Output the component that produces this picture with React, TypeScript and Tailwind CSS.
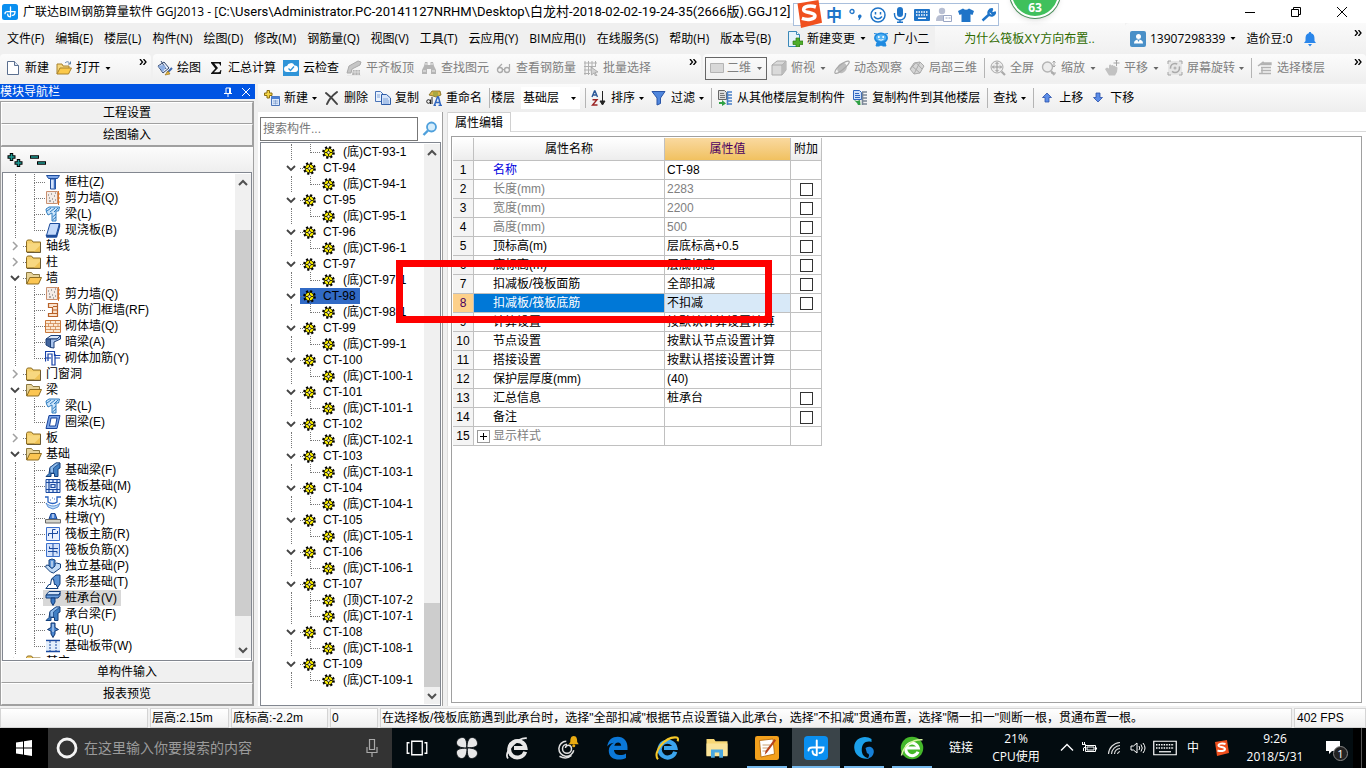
import type { ReactNode } from 'react'

const SONG = "font-['Liberation_Sans','Noto_Sans_CJK_SC',sans-serif]"
const YAHEI = "font-['Open_Sans','Noto_Sans_CJK_SC',sans-serif]"

const icons: Record<string, ReactNode> = {
    newFile: <><path d="M2.500 1.500h7l4 4v9h-11z" fill="#fff" stroke="#5b6f8f" /><path d="M9.500 1.500v4h4" fill="#dce6f4" stroke="#5b6f8f" /></>,
    open: <><path d="M1 14V4h5l1 2h6v3" fill="#f6d77c" stroke="#a8822c" /><path d="M1 14l3-6h11.500l-3 6z" fill="#fbc94a" stroke="#a8822c" /><path d="M9 3c2-2 4-1.500 5 1M14.500 1.500V4H12" fill="none" stroke="#5b7fa8" /></>,
    draw: <><path d="M1 6l6-4 5 6-6 5z" fill="#e6eefb" stroke="#31456b" /><path d="M4 1l5 8" stroke="#31456b" /><path d="M1 6l5-1 3 2-3 5z" fill="#8fb0e4" /><path d="M15 8l-5 5" stroke="#3c68b0" strokeWidth="2" /><path d="M11 11l-3 4 5-1z" fill="#e8b53a" stroke="#8c6a18" strokeWidth=".6" /></>,
    sigma: <path d="M3 2h10v3.500h-1c0-1.500-.7-2-2-2H6.300L10 8l-4 4.300h4.200c1.300 0 2-.8 2.200-2.200h1L12.800 14H3v-.8L7.300 8.500 3 3z" fill="#111" />,
    cloud: <><rect width="16" height="16" fill="#2f94d8" /><path d="M4 12a3 3 0 0 1 0-6 4 4 0 0 1 7.500-.5A3.200 3.200 0 0 1 12 12z" fill="#fff" /><path d="M5.500 8.500l2 2 3.500-4" fill="none" stroke="#2f94d8" strokeWidth="1.300" /></>,
    align: <><path d="M1 13l2-7 9-5 3 1-1 3-8 4-1 4z" fill="#c6c6c6" stroke="#aaa" /><path d="M7 10h7v5H6z" fill="#b4b4b4" /><path d="M1 15.500h14M7 12h7M9 10v5M12 10v5" stroke="#e6e6e6" strokeWidth=".8" /></>,
    binoc: <><path d="M4 2h2.500v3h3V2H12l1 4 2 4v4h-5V9H6v5H1v-4l2-4z" fill="#b5b5b5" /><path d="M2 11h3M11 11h3M4 4h2M10 4h2" stroke="#eee" /></>,
    glasses: <><circle cx="4" cy="10" r="2.500" fill="none" stroke="#aaa" strokeWidth="1.400" /><circle cx="11" cy="10" r="2.500" fill="none" stroke="#aaa" strokeWidth="1.400" /><path d="M6.500 9.500h2M2 8l4-4M13.500 9.500V4" stroke="#aaa" fill="none" strokeWidth="1.200" /></>,
    batch: <><path d="M2 1v14M5.500 1v14M9 1v8M12.500 1v6M1 3h13M1 6.500h12M1 10h7M1 13.500h6" stroke="#b0b0b0" /><path d="M8 7l7 5-3 .5 2 3-1.500.5-1.500-3-2.500 2z" fill="#d2d2d2" stroke="#999" strokeWidth=".7" /></>,
    flat: <path d="M1.500 3.500h13v9h-13z" fill="#d8d8d8" stroke="#b4b4b4" />,
    cube: <><path d="M1 5l5-4h9v9l-4 5H1z" fill="#dadada" stroke="#aaa" /><path d="M1 5h10v10M11 5l4-4" fill="none" stroke="#aaa" /><path d="M11 5l4-4v9l-4 5z" fill="#bcbcbc" /></>,
    orbit: <><ellipse cx="8" cy="8" rx="4.500" ry="5.500" transform="rotate(35 8 8)" fill="#bdbdbd" /><path d="M1 13c-1-2 3-7 8-10s7-2 6 0-4 5-8 8-5 3-6 2z" fill="none" stroke="#a8a8a8" strokeWidth="1.200" /></>,
    local3d: <><path d="M1 9l4-6 6-1 4 4-4 7-6 1z" fill="#d6d6d6" stroke="#aaa" /><path d="M3 6l8 7M7 2.500L13 9M11 2L5 14M7 2.500L1.500 9" stroke="#aaa" fill="none" /></>,
    full: <><circle cx="7" cy="7" r="6" fill="#ededed" stroke="#aaa" /><path d="M7 2.500v9M2.500 7h9M5.500 4L7 2.500 8.500 4M5.500 10L7 11.500 8.500 10M4 5.500L2.500 7 4 8.500M10 5.500L11.500 7 10 8.500" stroke="#999" fill="none" /><path d="M11.500 11.500l3.500 3.500" stroke="#aaa" strokeWidth="2.200" /></>,
    zoom: <><circle cx="6.500" cy="7" r="5" fill="#ededed" stroke="#b4b4b4" strokeWidth="1.400" /><path d="M10 11l3.500 4" stroke="#b4b4b4" strokeWidth="2.200" /><path d="M13 1v6M11.500 2.500L13 1l1.500 1.500M11.500 5.500L13 7l1.500-1.500M10 13h5" stroke="#a4a4a4" fill="none" /></>,
    pan: <><path d="M1 9l2-1.500 2 1V5.500c.5-1.500 2-1.500 2.300 0 .7-1 2-.6 2.200.5 1-.6 2 0 2 1 1-.4 2 .2 2 1.200L13 12l-2 3.500H5z" fill="#c2c2c2" /><path d="M12.500 0v6M9.500 3h6M11.500 1l1-1 1 1" stroke="#a4a4a4" fill="none" /></>,
    rotate: <><path d="M1 1h14v14H1z" fill="#e6e6e6" /><circle cx="8" cy="8" r="4.500" fill="none" stroke="#aaa" strokeWidth="1.600" strokeDasharray="10 3" /><path d="M1 4V1h3M12 1h3v3M15 12v3h-3M4 15H1v-3" fill="none" stroke="#a4a4a4" /><circle cx="8" cy="8" r="1.500" fill="#b4b4b4" /></>,
    floors: <path d="M1 6l5-4 1 1h7v1.500H3.500zM4 7.500h10M4 10.500h10M2 13.500h12M5 7v7" fill="#bbb" stroke="#b2b2b2" strokeWidth="1.300" />,
    addItem: <><path d="M7.500 6.500h8v9h-8z" fill="#dbe8fb" stroke="#4a74b8" /><path d="M7.500 6.500h8V9h-8z" fill="#4a7fd4" /><path d="M9 11h5M9 13.200h5M11.500 10v4.500" stroke="#7fa0d0" strokeWidth=".8" /><path d="M3 .5h2.500v2.500H8v2.500H5.500V8H3V5.500H.5V3H3z" fill="#f5d545" stroke="#8a6d10" /></>,
    del: <path d="M2 3c4 3 7 6 11 11M13 2C9 5 5 9 3 14" fill="none" stroke="#444" strokeWidth="2" strokeLinecap="round" />,
    copy: <><path d="M.5 1.500h5l3 3v7h-8z" fill="#eaf2fd" stroke="#4a74b8" /><path d="M6.500 4.500h5l4 3.500v6.500h-9z" fill="#d5e4fa" stroke="#2f5da8" /><path d="M8 9h5M8 11h6M8 13h6M2 5h3M2 7h3" stroke="#6b93cf" strokeWidth=".8" /></>,
    rename: <><path d="M3 5l3-4h8l1 4-5 2-3-1z" fill="#d9b648" stroke="#7d671c" strokeWidth=".8" /><path d="M7 3h5M7 5h5" stroke="#7a9a3c" /><circle cx="2.500" cy="11.500" r="1.800" stroke="#222" /><path d="M4.500 9.500v4.500M6 7v7" stroke="#222" /><path d="M7.500 15.500h2.500M12.500 15.500H16M8.500 15l3-8h1l2 8M10 12.500h4" stroke="#2f66c0" strokeWidth="1.500" /></>,
    sort: <><path d="M1 7l2.500-6h.5L6.500 7M2 5h3.500" stroke="#2b5797" strokeWidth="1.400" /><path d="M1.500 9.700h4.500L1.500 15h5" stroke="#9b2323" strokeWidth="1.400" /><path d="M11.500 1v12M9 11l2.500 4 2.500-4z" stroke="#222" fill="#222" /></>,
    filter: <path d="M1 1.500h13L9.500 8v5.500L6 15V8z" fill="#4f86dd" stroke="#2a55a6" />,
    copyFrom: <><path d="M1.500.5h6l2 2v7h-8z" fill="#dcdcdc" stroke="#666" /><path d="M3 3.500h4M3 5.500h5M3 7.500h5" stroke="#777" /><path d="M10 2h5M10 5h5M10 8h5M10 11h5M10 14h5M10.500 2v13" stroke="#4a80c8" strokeWidth="1.600" /><path d="M2 12h3v-2l4 3.500L5 16v-2H2z" fill="#2fa044" /></>,
    copyTo: <><path d="M1.500.5h6l2 2v7h-8z" fill="#cfe1fb" stroke="#2f66c0" /><path d="M3 3.500h4M3 5.500h5M3 7.500h5" stroke="#2f66c0" /><path d="M10 2h5M10 5h5M10 8h5M10 11h5M10 14h5M10.500 2v13" stroke="#7a8796" strokeWidth="1.600" /><path d="M2 10l3 1 3-1 .5 5H6l-1-2z" fill="#2fa044" /></>,
    up: <path d="M8 3l4.500 4.500H10V12H6V7.500H3.500z" fill="#5b8de8" stroke="#2c52a8" strokeWidth=".8" />,
    down: <path d="M8 12l4.500-4.500H10V3H6v4.500H3.500z" fill="#5b8de8" stroke="#2c52a8" strokeWidth=".8" />,
    change: <><path d="M1.500.5h8l3 3v12h-11z" fill="#e6f3fb" stroke="#3a88b8" /><path d="M9.500.5v3h3" fill="#fff" stroke="#3a88b8" /><path d="M9 7h3.500v3H16v3.500h-3.500V16H9v-2.500H6V10h3z" fill="#4fae2a" stroke="#2c7a12" strokeWidth=".7" /></>,
    robot: <><ellipse cx="8" cy="7" rx="7" ry="5.500" fill="#1f8ae0" /><ellipse cx="8" cy="6.800" rx="5.200" ry="3.600" fill="#55b4f4" /><path d="M4 11.500h8l1 3.500h-3l-2-1-2 1H3zM1 2.500l3 .5M15 2.500l-3 .5" fill="#1f8ae0" stroke="#1f8ae0" /><circle cx="5.800" cy="6" r="1" fill="#fff" /><circle cx="10.200" cy="6" r="1" fill="#fff" /><path d="M5.500 8.300q2.500 1.800 5 0" stroke="#fff" fill="none" strokeWidth=".9" /></>,
    user: <><rect width="16" height="16" rx="2" fill="#4a90c8" /><circle cx="8.500" cy="5.500" r="2.500" fill="#fff" /><path d="M4 12.500c0-3 2-4 4.500-4s4.500 1 4.500 4z" fill="#fff" /><path d="M7.500 9l1 2 1-2" fill="#4a90c8" /></>,
    bell: <path d="M8 1c.8 0 1.200.5 1.200 1.200C12 3 12.500 5 12.500 8v2l1.500 2H2l1.500-2V8c0-3 .5-5 3.300-5.800C6.800 1.500 7.200 1 8 1zM6 13h4l-2 2.500z" fill="#2a86ea" />,
    folder: <><path d="M.5 3.500l1-1.500h4l1.500 2h7.500v10H.5z" fill="#f5cf6b" stroke="#8d6d22" /><path d="M1.500 5.500H14V13H1.500z" fill="#f8d880" /><path d="M8 13.500l6-6v6z" fill="#f0c356" /><path d="M14.500 5v9.500H1" fill="none" stroke="#6b5a35" /></>,
    folderOpen: <><path d="M.5 14V2.500h5L7 4.500h6.500V8" fill="#e8d49a" stroke="#8d7a42" /><path d="M.8 14l3-6.500h11.700L12.500 14z" fill="#fbc552" stroke="#8d6d22" /></>,
    column: <><path d="M1.500 1.500h13l-2 3h-9z" fill="#7ba5e8" stroke="#1e4d9c" /><path d="M5.500 5h5v10h-5z" fill="#d5e4fc" stroke="#1e4d9c" /><path d="M9.500 5v10" stroke="#3b6cc0" strokeWidth="1.500" /></>,
    wall: <><path d="M1.500 1.500h11v12h-11z" fill="#f4ebe6" stroke="#c99070" /><path d="M3 5h1M6 4h1M9 6h1M4 8h1M7 9h1M10 10h1M4 11h2M8 12h1M10 3h1" stroke="#666" /><path d="M13.500 1v14M12.500 4H15M12.500 8H15M12.500 12H15" stroke="#d9772c" /></>,
    beam: <><path d="M1 3l3-2h10.500l-1 4H11v10H7V7L3 9 1.500 6z" fill="#cbe4fa" stroke="#2e7cc0" /><path d="M2 5l4-3M5 6l5-4M9 6l4-4M7.500 11L11 8M7.500 14l3.500-3" stroke="#2e7cc0" /></>,
    slab: <><path d="M5 1.500h9.500L11 13.500H1.500z" fill="#c4dafb" stroke="#1e4d9c" /><path d="M1.500 13.500h9.500v1.500H2zM14.500 1.500v3L11.500 15" fill="none" stroke="#1e4d9c" strokeWidth="1.400" /></>,
    doorWall: <path d="M3.500 1.500h9v13h-9v-3h4v-6h-4zM8 4.500h4M8 8h4M8 11.500h4" fill="#fbe3cc" stroke="#b8622a" strokeWidth="1.200" />,
    brick: <><path d="M.5 2.500h15v12H.5z" fill="#fce8d2" stroke="#c8783c" /><path d="M1 5.500h14M1 8.500h14M1 11.500h14M5.500 3v3M10.500 3v3M3.500 6v3M8.500 6v3M13 6v3M5.500 9v3M10.500 9v3M8.500 12v3" stroke="#d08850" strokeWidth=".8" /></>,
    hidden: <><path d="M1 5l5-3.500h9.500L12 5z" fill="#dce8fa" stroke="#1d3f78" /><path d="M1 5h4.500v8.500L1 11z" fill="#43659c" stroke="#1d3f78" /><path d="M5.500 5H12l3.500-3.500V5L9 8v6l-3.500-.5z" fill="#a9c4ec" stroke="#1d3f78" /></>,
    rebar: <path d="M.5 11.500V1.500h9v4h6M3 11V4h4v11h3V8h5M0 8h6M10 4v4" fill="none" stroke="#1540a8" strokeWidth="1.200" />,
    ring: <><path d="M4 1.500h11L12 14.500H1z" fill="#7ba5e8" stroke="#17429a" /><path d="M6 4h6l-1.500 8H4.500z" fill="#fff" stroke="#17429a" /></>,
    footBeam: <><path d="M1 14.500l3-3 1-6 6-4.500h4v5l-2 1v7.500H9.500v-3H6v3z" fill="#3f7fc4" stroke="#123e7a" /><path d="M5 5.500L11 1h4L8.500 6v5H5z" fill="#8fbcec" stroke="#123e7a" strokeWidth=".7" /></>,
    raft: <><path d="M1 1.500h14v13H1z" fill="#dbe9fd" stroke="#1a4aa0" /><path d="M4 1v14M12 1v14M1 4.500h14M1 11.500h14M6 6.500h4v3H6zM8 1v3M8 12v3" fill="none" stroke="#1a4aa0" strokeWidth="1.200" /></>,
    pit: <><path d="M0 3h3v5q5 3 9 0V3h4" fill="none" stroke="#2a63c0" strokeWidth="1.300" /><path d="M1 9c4 4 10 4 14 0l-2 4-5 2-5-2z" fill="#c4e0fa" stroke="#3c78cc" strokeWidth=".8" /><path d="M5 6h1M9 5h1M7 4h1" stroke="#3c78cc" /></>,
    pier: <><path d="M6 3.500h4l2 5.500H4z" fill="#4a83d8" stroke="#16408a" /><path d="M8 4v4" stroke="#fff" /><path d="M.5 9.500h15v3.500H.5z" fill="#d4d4cc" stroke="#666" /></>,
    raftMain: <><path d="M1.500 1.500h13v13h-13z" fill="#e8f0fe" stroke="#3c70cc" /><path d="M7.500 12.500v-9h3M3.500 10V7.500h9V5" stroke="#1a4aa0" /></>,
    raftNeg: <><path d="M1.500 1.500h13v13h-13z" fill="#d3e2fb" stroke="#3c70cc" /><path d="M8 2v12M4 6.500h9M3 9.500h9M4.500 4.500v2M12 9.500v2" stroke="#1a4aa0" /></>,
    isolated: <><path d="M.5 9l5 5 3 1 7-5V6l-4-1-4 3-6-1z" fill="#c2dbf6" stroke="#123e7a" /><path d="M4 2l3-1 3 1v6l-3 2.500L4 8z" fill="#5a92d4" stroke="#123e7a" /><path d="M7 3v6" stroke="#fff" /></>,
    strip: <><path d="M1 14.500l3-4h2l1-6 4-3.500h4v9l-3 4.500z" fill="#5a92d4" stroke="#123e7a" /><path d="M1 14.500l3-4h1.500L6.500 5h2l1 5.500H11l2 4z" fill="#fff" stroke="#123e7a" /></>,
    cap: <><path d="M1 5l3-3.500h11.500L14 5z" fill="#cfe3fa" stroke="#123e7a" /><path d="M1 5h13l1-2v2.500L13 8H1z" fill="#6aa0e0" stroke="#123e7a" /><path d="M6 8h4v4l-2 3.500L6 12z" fill="#3b78c4" stroke="#123e7a" /></>,
    pile: <><path d="M6 1h4v4.500l3.500 2L10 9v3l-2 3.500L6 12V9L2.500 7.500l3.500-2z" fill="#4a86d0" stroke="#0f3570" /><path d="M8 2v8" stroke="#dcebfc" /></>,
    band: <><path d="M1 4h14v9H1z" fill="#e2eefc" /><path d="M1 2.500h14M1 13.500h14" stroke="#1a4aa0" strokeWidth="1.400" /><path d="M5 3v10M11 3v10" stroke="#1a4aa0" strokeDasharray="2 1" /></>,
    gear: <><circle cx="8" cy="8" r="6.300" stroke="#000" strokeWidth="3" strokeDasharray="2.500 2.450" /><circle cx="8" cy="8" r="5.300" fill="#fff200" stroke="#000" strokeWidth="1" /><path d="M8 3.500v9M3.500 8h9" stroke="#000" strokeWidth="1" /><circle cx="8" cy="8" r="1.900" fill="#fffbd0" stroke="#000" strokeWidth=".9" /></>,
    smile: <><circle cx="8" cy="8" r="7" fill="none" stroke="#1f74c8" strokeWidth="1.500" /><path d="M5.500 5v2.500M10.500 5v2.500M4 9.500q4 4.500 8 0" fill="none" stroke="#1f74c8" strokeWidth="1.500" /></>,
    punct: <><circle cx="4" cy="4.500" r="2" fill="none" stroke="#1f74c8" strokeWidth="1.300" /><path d="M10 9.500a1.800 1.800 0 1 1 2.500 1.500c-.5 1.500-1 2-2.500 2.500 1-1 1-2 .8-2.500-.5-.3-.8-.8-.8-1.500z" fill="#1f74c8" /></>,
    mic: <><rect x="5" y="0" width="6" height="10" rx="3" fill="#1f74c8" /><path d="M2.500 6v1.500a5.500 5.500 0 0 0 11 0V6M8 13v3M5 15.300h6" fill="none" stroke="#1f74c8" strokeWidth="1.400" /></>,
    kbd: <><rect x="0" y="2" width="16" height="12" rx="1" fill="#1f74c8" /><path d="M2 5h12M2 8h12" stroke="#fff" strokeWidth="1.500" strokeDasharray="1.500 1" /><path d="M4 11.300h8" stroke="#fff" strokeWidth="1.400" /></>,
    person: <><circle cx="6" cy="4" r="3.200" fill="#b8bfd2" /><path d="M0 14c0-5 2-6 6-6h3v6z" fill="#b8bfd2" /><path d="M7.500 8.500h8v6h-8zM9.500 11h2M12.500 11h2" fill="#fff" stroke="#9aa6c4" /></>,
    shirt: <path d="M5 1.500q3 2.500 6 0l5 2.500-1.500 4-2-.7V15h-9V7.300l-2 .7L0 4z" fill="#1f74c8" />,
    wrench: <path d="M2.500 13.500L9 7.500M9 7.500a3.500 3.500 0 0 1 3-5.300L11 5l1.500 1.500 2.500-1a3.500 3.500 0 0 1-6 2" fill="none" stroke="#1f74c8" strokeWidth="2.400" strokeLinejoin="round" />,
    search: <><circle cx="9.500" cy="6" r="4.500" fill="#d6edfb" stroke="#4fa0dc" strokeWidth="1.800" /><path d="M6 9.500L1.500 14" stroke="#4fa0dc" strokeWidth="2.400" /></>,
    plusPlus: <><path d="M4.500 1v8M.5 5h8M11.500 7v8M7.500 11h8" stroke="#000" strokeWidth="3.400" /><path d="M4.500 2v6M1.500 5h6M11.500 8v6M8.500 11h6" stroke="#1f9a94" strokeWidth="1.600" /></>,
    minusMinus: <><path d="M0 5h9M7 11h9" stroke="#000" strokeWidth="3.400" /><path d="M1 5h7M8 11h7" stroke="#1f9a94" strokeWidth="1.600" /></>,
    sogou: <><path d="M2 2l12-2 2 13-12 3z" fill="#f0501e" /><path d="M12.500 4c-3-1-7-.5-7 1.500s6.500 1.200 6.500 3.500-4.500 2.500-7.500 1.500" fill="none" stroke="#fff" strokeWidth="2" /></>,
    glodon: <><rect width="16" height="16" rx="2.500" fill="#0a8ff0" /><path d="M8.500 3v9.800M8.500 12.800c-2.200 0-2.800-1.300-2.800-2.600M3 9.700c0-1.500 1-2 2.500-2H13c0 2.500-1 3.600-2.700 3.600" fill="none" stroke="#fff" strokeWidth="1.300" strokeLinecap="round" /></>,
    windows: <path d="M0 2.500l7-1V7.600H0zM8 1.300L16 0v7.600H8zM0 8.500h7v6l-7-1zM8 8.500h8V16l-8-1.300z" fill="#fff" />,
    taskView: <path d="M4.500 3.500h7v9h-7zM3 4.500H1.500v7H3M13 4.500h1.500v7H13" fill="none" stroke="#fff" strokeWidth=".9" />,
    clover: <g fill="#e8e8e8" stroke="#0b1216" strokeWidth=".6"><path d="M7.800 8C3 8 1 6.500 1 4.500S3 1 5 1s3 2 2.800 7z" /><path d="M8 7.800C8 3 9.500 1 11.500 1S15 3 15 5s-2 3-7 2.800z" /><path d="M8.200 8C13 8 15 9.500 15 11.500S13 15 11 15s-3-2-2.800-7z" /><path d="M8 8.200C8 13 6.500 15 4.500 15S1 13 1 11s2-3 7-2.800z" /></g>,
    eWhite: <><path d="M13.500 10.500A5.500 5.500 0 1 1 13.700 8H6" fill="none" stroke="#e8e8e8" strokeWidth="2.600" /><path d="M2 15C-1 11 8 1 14.500 1.500" fill="none" stroke="#e8e8e8" strokeWidth="1.200" /></>,
    swirl: <><path d="M7.500 3.500a5 5 0 1 0 5 6M8 5.500a3 3 0 1 0 3 3c0-3-4-3-4-.5M3 13.500q4.500 2.500 8-.5" fill="none" stroke="#e0e0e0" strokeWidth="1" /><path d="M12.500 0c2 0 2.300 2 2.300 4l1 1.500h-6.600L10.200 4c0-2 .3-4 2.300-4z" fill="#e9ab12" /><circle cx="12.500" cy="6.500" r="1" fill="#e9ab12" /></>,
    edge: <path d="M1.500 7C2 2.500 5 .5 8.500.5c4 0 6.500 3 6.500 7v1.800H6c.2 3.700 5 4.200 8 2.400v3C9 17 2.500 15.500 2.500 9.800c0-2.500 1.500-4.300 3.500-5.300C3.800 4.800 2.300 5.800 1.500 7zM6.200 6.500h4.600C10.800 3.500 6.800 3.500 6.200 6.500z" fill="#0b78d8" />,
    ie: <><path d="M13.500 10.500A5.300 5.300 0 1 1 13.600 8H6" fill="none" stroke="#3ba4ec" strokeWidth="2.800" /><path d="M2 15.500C-2 11 7 0 14.500 1c1 .3 1 1.500.5 2.500" fill="none" stroke="#f6c829" strokeWidth="1.400" /></>,
    explorer: <><path d="M1 2h5l1 1.500h8V13H1z" fill="#f8d775" /><path d="M1 5h14v8.500H1z" fill="#fbe49a" /><path d="M4 14.500V9h8v5.500H9.500V11h-3v3.500z" fill="#4aa8e0" /></>,
    pad: <><rect width="16" height="16" rx="1.500" fill="#f2a01c" /><path d="M3 3l9-1 1 10-9 2z" fill="#fff" stroke="#b86c0c" strokeWidth=".6" /><path d="M5 6h5M5 8h5M5 10h3" stroke="#c9a070" strokeWidth=".8" /><path d="M14 3L8 11l-1.500 1.500L7 10l6-8z" fill="#b8441c" /></>,
    gBlue: <><path d="M13 2C9-1 1 1 1.500 8c.3 5 5 8 10 7-3-.5-5-2.500-5-5.500C6.500 5 9 3 13 4z" fill="#1ba0ea" /><path d="M9 8c3-2 6 0 5.500 3-.5 2.500-2 3.500-4 4 1-1.500 1.500-3-.5-3.500z" fill="#1680d8" /></>,
    eGreen: <><circle cx="8" cy="8" r="7.500" fill="#45b82a" /><path d="M12 10.500A4.200 4.200 0 1 1 12.200 8H5" fill="none" stroke="#fff" strokeWidth="2" /><path d="M1 13C2 7 8 2 15 2.500" fill="none" stroke="#d8f4a0" strokeWidth="1" /></>,
    chevUp: <path d="M2 10.500l6-6 6 6" fill="none" stroke="#fff" strokeWidth="1.400" />,
    battery: <path d="M4.500 5.500h10v6h-10zM15.500 7.500v2M6 7h7v3H6zM1.500 2v2M3.500 2v2M1 4.500h3.500v2.500L2.500 8v3" fill="none" stroke="#fff" />,
    wifi: <path d="M1.500 14A12 12 0 0 1 13 2.500M4.500 14A9 9 0 0 1 13 5.500M7.500 14a6 6 0 0 1 5.500-5.500M10.500 14a3 3 0 0 1 2.500-2.500" fill="none" stroke="#ddd" strokeWidth="1.100" />,
    volume: <path d="M1 6h2.500L7 3v10L3.500 10H1zM9 6q1.500 2 0 4M11 4.500q2.500 3.500 0 7M13 3q4 5 0 10" fill="none" stroke="#fff" />,
    keyboard: <><path d="M.5 3.500h15v9H.5z" fill="none" stroke="#fff" strokeWidth=".8" /><path d="M2 5.800h12M2 8h12" stroke="#fff" strokeDasharray="1 .7" /><path d="M4 10.500h8" stroke="#fff" strokeWidth=".8" /></>,
    notice: <path d="M1 1h14v10H7l-3 3v-3H1z" fill="#fff" />,
}

function Icon({ name, className = 'size-4' }: { name: string; className?: string }) {
    return (
        <svg viewBox="0 0 16 16" className={`shrink-0 ${className}`} fill="none" aria-hidden="true">
            {icons[name]}
        </svg>
    )
}

function Arrow({ wide, gray }: { wide?: boolean; gray?: boolean }) {
    return (
        <svg viewBox="0 0 5 3" className={`h-[3px] shrink-0 ${wide ? 'w-2' : 'w-[5px]'}`} aria-hidden="true">
            <path d="M0 0h5L2.500 3z" fill={gray ? '#666' : '#000'} />
        </svg>
    )
}

function More() {
    return (
        <svg viewBox="0 0 8 6" className="mb-3 h-1.5 w-2 shrink-0" aria-hidden="true">
            <path d="M1 0l2.500 3L1 6M4.500 0L7 3 4.500 6" fill="none" stroke="#000" strokeWidth="1.300" />
        </svg>
    )
}

function Divider() {
    return <span className="-mr-0.5 h-5 w-px shrink-0 bg-[#b4b4b4]" />
}

interface ToolProps {
    icon?: string
    label: string
    gray?: boolean
    arrow?: 'near' | 'far'
}

function Tool({ icon, label, gray, arrow }: ToolProps) {
    return (
        <button className={`flex shrink-0 items-center gap-1 whitespace-nowrap ${gray ? 'text-[#808080]' : 'text-black'}`}>
            {icon && <Icon name={icon} />}
            {label}
            {arrow && <Arrow wide={arrow === 'far'} gray={gray} />}
        </button>
    )
}

function TitleBar() {
    return (
        <header className="relative flex h-[23px] shrink-0 items-center bg-white pl-0.5">
            <Icon name="glodon" />
            <h1 className="ml-[5px] whitespace-nowrap">
                广联达BIM钢筋算量软件 GGJ2013 - [
                <span className="font-['Roboto','Noto_Sans_CJK_SC',sans-serif] text-[13px] leading-4">
                    C:\Users\Administrator.PC-20141127NRHM\Desktop\白龙村-2018-02-02-19-24-35(2666版).GGJ12]
                </span>
            </h1>
            <div className="absolute top-[3px] right-[367px] z-10 flex h-[23px] w-[206px] items-center gap-1.5 border border-[#a9bfdc] bg-white pl-8 text-[#1f74c8]">
                <Icon name="sogou" className="absolute -top-1 left-0 size-7" />
                <span className="text-base leading-4 font-bold">中</span>
                <Icon name="punct" />
                <Icon name="smile" />
                <Icon name="mic" />
                <Icon name="kbd" />
                <Icon name="person" />
                <Icon name="shirt" />
                <Icon name="wrench" />
            </div>
            <div className="absolute -top-8 right-[306px] z-10 flex size-[50px] items-end justify-center rounded-full border-2 border-white bg-[#3fc05c] font-bold text-white shadow-md ring-1 ring-[#4a8f5a]">63</div>
            <div className="ml-auto flex items-center gap-[34px] pr-[18px]">
                <button aria-label="最小化">
                    <svg viewBox="0 0 12 12" className="size-3"><path d="M1 6.500h10" stroke="#000" /></svg>
                </button>
                <button aria-label="还原">
                    <svg viewBox="0 0 12 12" className="size-3"><path d="M1.500 3.500h7v7h-7zM3.500 3.500v-2h7v7h-2" fill="none" stroke="#000" /></svg>
                </button>
                <button aria-label="关闭">
                    <svg viewBox="0 0 12 12" className="size-3"><path d="M1 1l10 10M11 1L1 11" stroke="#000" /></svg>
                </button>
            </div>
        </header>
    )
}

const menus = ['文件(F)', '编辑(E)', '楼层(L)', '构件(N)', '绘图(D)', '修改(M)', '钢筋量(Q)', '视图(V)', '工具(T)', '云应用(Y)', 'BIM应用(I)', '在线服务(S)', '帮助(H)', '版本号(B)']

function MenuBar() {
    return (
        <nav className="flex h-[31px] shrink-0 items-center pl-[7px]">
            <div className="flex shrink-0 items-center gap-[11px]">
                {menus.map((m) => <button key={m} className="whitespace-nowrap">{m}</button>)}
            </div>
            <div className="ml-4 flex shrink-0 items-center gap-1.5">
                <Tool icon="change" label="新建变更" arrow="far" />
                <Tool icon="robot" label="广小二" />
            </div>
            <div className={`ml-1.5 flex h-full min-w-0 flex-1 items-center bg-gradient-to-b from-[#fafafa] to-[#f0f0f0] pl-[29px] ${SONG}`}>
                <a href="#" className="whitespace-nowrap text-[#2f6b00]">为什么筏板XY方向布置..</a>
            </div>
            <div className="flex h-full w-[241px] shrink-0 items-center gap-[9px] rounded-l bg-gradient-to-b from-[#fafafa] to-[#f0f0f0] pl-[5px]">
                <Tool icon="user" label="13907298339" arrow="far" />
                <span>造价豆:0</span>
                <Icon name="bell" />
                <button aria-label="更多" className="ml-auto pr-1"><More /></button>
            </div>
        </nav>
    )
}

function ToolBar() {
    const group = 'flex h-7 items-center gap-[7px] rounded bg-gradient-to-b from-[#fcfcfc] to-[#efefef]'
    return (
        <div className="flex h-[30px] shrink-0 items-start gap-0.5">
            <div className={`${group} w-[151px] shrink-0 pl-[5px]`}>
                <Tool icon="newFile" label="新建" />
                <Tool icon="open" label="打开" arrow="far" />
                <button aria-label="更多" className="ml-auto pr-1"><More /></button>
            </div>
            <div className={`${group} w-[548px] shrink-0 pl-1`}>
                <Tool icon="draw" label="绘图" />
                <Tool icon="sigma" label="汇总计算" />
                <Tool icon="cloud" label="云检查" />
                <Tool icon="align" label="平齐板顶" gray />
                <Tool icon="binoc" label="查找图元" gray />
                <Tool icon="glasses" label="查看钢筋量" gray />
                <Tool icon="batch" label="批量选择" gray />
                <button aria-label="更多" className="ml-auto pr-1"><More /></button>
            </div>
            <div className={`${group} min-w-0 flex-1 pl-0.5`}>
                <label className="-mr-[3px] flex h-[23px] w-[62px] shrink-0 items-center gap-0.5 border border-[#666] pr-1 pl-[3px] text-[#808080]">
                    <Icon name="flat" />
                    <select aria-label="视图维度" className="w-8 appearance-none bg-transparent outline-none">
                        <option>二维</option>
                        <option>三维</option>
                    </select>
                    <Arrow gray />
                </label>
                <Tool icon="cube" label="俯视" gray arrow="far" />
                <Tool icon="orbit" label="动态观察" gray />
                <Tool icon="local3d" label="局部三维" gray />
                <Divider />
                <Tool icon="full" label="全屏" gray />
                <Tool icon="zoom" label="缩放" gray arrow="far" />
                <Tool icon="pan" label="平移" gray arrow="far" />
                <Tool icon="rotate" label="屏幕旋转" gray arrow="near" />
                <Divider />
                <Tool icon="floors" label="选择楼层" gray />
                <button aria-label="更多" className="ml-auto pr-1"><More /></button>
            </div>
        </div>
    )
}

function Chevron({ open = true }: { open?: boolean }) {
    return (
        <svg viewBox="0 0 10 10" className="size-2.5 shrink-0" aria-hidden="true">
            {open
                ? <path d="M1 3l4 4 4-4" fill="none" stroke="#444" strokeWidth="1.800" />
                : <path d="M3 1l4 4-4 4" fill="none" stroke="#a0a0a0" strokeWidth="1.500" />}
        </svg>
    )
}

function Branch({ last, wide }: { last?: boolean; wide?: boolean }) {
    return (
        <>
            <span className="h-4 w-[19px] shrink-0 border-l border-dotted border-[#777]" />
            <span className={`flex h-4 shrink-0 flex-col ${wide ? 'w-[11px]' : 'w-2.5'}`}>
                <span className="h-[9px] border-b border-l border-dotted border-[#777]" />
                {!last && <span className="h-[7px] border-l border-dotted border-[#777]" />}
            </span>
        </>
    )
}

function ScrollBar({ thumb, gap }: { thumb: string; gap: string }) {
    return (
        <div className="flex w-4 shrink-0 flex-col items-center bg-[#f0f0f0]">
            <span className="flex h-[17px] shrink-0 items-center">
                <svg viewBox="0 0 10 10" className="size-2.5"><path d="M1 7l4-4 4 4" fill="none" stroke="#505050" strokeWidth="2" /></svg>
            </span>
            <span className={gap} />
            <span className={`w-full bg-[#cdcdcd] ${thumb}`} />
            <span className="mt-auto flex h-[17px] shrink-0 items-center">
                <svg viewBox="0 0 10 10" className="size-2.5"><path d="M1 3l4 4 4-4" fill="none" stroke="#505050" strokeWidth="2" /></svg>
            </span>
        </div>
    )
}

interface ModuleNode {
    label: string
    icon?: string
    open?: boolean
    last?: boolean
    selected?: boolean
}

const modules: ModuleNode[] = [
    { label: '框柱(Z)', icon: 'column' },
    { label: '剪力墙(Q)', icon: 'wall' },
    { label: '梁(L)', icon: 'beam' },
    { label: '现浇板(B)', icon: 'slab', last: true },
    { label: '轴线' },
    { label: '柱' },
    { label: '墙', open: true },
    { label: '剪力墙(Q)', icon: 'wall' },
    { label: '人防门框墙(RF)', icon: 'doorWall' },
    { label: '砌体墙(Q)', icon: 'brick' },
    { label: '暗梁(A)', icon: 'hidden' },
    { label: '砌体加筋(Y)', icon: 'rebar', last: true },
    { label: '门窗洞' },
    { label: '梁', open: true },
    { label: '梁(L)', icon: 'beam' },
    { label: '圈梁(E)', icon: 'ring', last: true },
    { label: '板' },
    { label: '基础', open: true },
    { label: '基础梁(F)', icon: 'footBeam' },
    { label: '筏板基础(M)', icon: 'raft' },
    { label: '集水坑(K)', icon: 'pit' },
    { label: '柱墩(Y)', icon: 'pier' },
    { label: '筏板主筋(R)', icon: 'raftMain' },
    { label: '筏板负筋(X)', icon: 'raftNeg' },
    { label: '独立基础(P)', icon: 'isolated' },
    { label: '条形基础(T)', icon: 'strip' },
    { label: '桩承台(V)', icon: 'cap', selected: true },
    { label: '承台梁(F)', icon: 'footBeam' },
    { label: '桩(U)', icon: 'pile' },
    { label: '基础板带(W)', icon: 'band', last: true },
    { label: '其它' },
]

function ModuleRow({ node }: { node: ModuleNode }) {
    if (node.icon) {
        return (
            <li className="flex h-4 items-center pl-3">
                <Branch wide last={node.last} />
                <span className={`-ml-0.5 flex h-4 items-center gap-1 pr-1 pl-0.5 whitespace-nowrap ${node.selected ? 'bg-[#d8d8d8]' : ''}`}>
                    <Icon name={node.icon} />
                    {node.label}
                </span>
            </li>
        )
    }
    return (
        <li className="flex h-4 items-center pl-[7px]">
            <Chevron open={!!node.open} />
            <span className="ml-[3px] w-[3px] border-t border-dotted border-[#777]" />
            <Icon name={node.open ? 'folderOpen' : 'folder'} />
            <span className="ml-1">{node.label}</span>
        </li>
    )
}

function PanelButton({ label }: { label: string }) {
    return (
        <button className="h-[22px] shrink-0 border border-t-white border-r-[#a0a0a0] border-b-[#a0a0a0] border-l-white bg-[#f0f0f0]">
            {label}
        </button>
    )
}

function ModulePanel() {
    return (
        <aside className="flex w-[255px] shrink-0 flex-col">
            <div className="flex h-[15px] shrink-0 items-center bg-[#0054e3] text-white">
                <h2>模块导航栏</h2>
                <button aria-label="固定" className="ml-auto">
                    <svg viewBox="0 0 10 10" className="size-2.5"><path d="M3 1h4.500v5M3 1v5M1 6.500h8M5 6.500V10M6.500 1v5" fill="none" stroke="#fff" /></svg>
                </button>
                <button aria-label="关闭面板" className="mr-1 ml-2">
                    <svg viewBox="0 0 10 10" className="size-2.5"><path d="M1 1l8 8M9 1L1 9" stroke="#fff" /></svg>
                </button>
            </div>
            <div className="mt-0.5 mr-px flex min-h-0 flex-1 flex-col border border-[#a0a0a0]">
                <PanelButton label="工程设置" />
                <PanelButton label="绘图输入" />
                <div className="flex h-[26px] shrink-0 items-center gap-[7px] border-t border-[#a0a0a0] bg-gradient-to-b from-[#fcfcfc] to-[#eee] pl-1.5">
                    <button aria-label="全部展开" className="flex"><Icon name="plusPlus" /></button>
                    <button aria-label="全部折叠" className="flex"><Icon name="minusMinus" /></button>
                </div>
                <div className="mx-px flex min-h-0 flex-1 border border-[#828790] bg-white pt-px pb-0.5">
                    <ul className="min-w-0 flex-1 overflow-hidden">
                        {modules.map((node, i) => <ModuleRow key={i} node={node} />)}
                    </ul>
                    <ScrollBar gap="h-[39px]" thumb="h-[386px]" />
                </div>
                <PanelButton label="单构件输入" />
                <PanelButton label="报表预览" />
            </div>
        </aside>
    )
}

function ComponentToolBar() {
    return (
        <div className={`flex h-7 shrink-0 items-center gap-[7px] overflow-hidden bg-gradient-to-b from-[#fcfcfc] to-[#eee] pl-1.5 ${YAHEI}`}>
            <Tool icon="addItem" label="新建" arrow="near" />
            <Tool icon="del" label="删除" />
            <Tool icon="copy" label="复制" />
            <Tool icon="rename" label="重命名" />
            <Divider />
            <label className="-mr-0.5 -ml-1 flex shrink-0 items-center gap-1.5">
                楼层
                <span className="flex h-[22px] items-center bg-white pr-1 pl-0.5">
                    <select className="w-12 appearance-none outline-none">
                        <option>基础层</option>
                        <option>首层</option>
                    </select>
                    <Arrow />
                </span>
            </label>
            <Divider />
            <Tool icon="sort" label="排序" arrow="near" />
            <Tool icon="filter" label="过滤" arrow="near" />
            <Divider />
            <Tool icon="copyFrom" label="从其他楼层复制构件" />
            <Tool icon="copyTo" label="复制构件到其他楼层" />
            <Divider />
            <Tool label="查找" arrow="near" />
            <Divider />
            <Tool icon="up" label="上移" />
            <Tool icon="down" label="下移" />
        </div>
    )
}

const caps = [94, 95, 96, 97, 98, 99, 100, 101, 102, 103, 104, 105, 106, 107, 108, 109]

function CapLeaf({ label, last = true }: { label: string; last?: boolean }) {
    return (
        <li className="flex h-4 items-center pl-[30px]">
            <Branch last={last} />
            <Icon name="gear" className="ml-0.5 size-[13px]" />
            <span className="ml-2 whitespace-nowrap">{label}</span>
        </li>
    )
}

function CapGroup({ no }: { no: number }) {
    return (
        <>
            <li className="flex h-4 items-center pl-[25px]">
                <Chevron />
                <span className={`ml-1 flex h-4 items-center pr-1 ${no === 98 ? 'bg-[#316ac5]' : ''}`}>
                    <span className="w-[3px] border-t border-dotted border-[#777]" />
                    <Icon name="gear" className="size-[13px]" />
                    <span className="ml-[7px]">CT-{no}</span>
                </span>
            </li>
            {no === 107 && <CapLeaf label="(顶)CT-107-2" last={false} />}
            <CapLeaf label={`(底)CT-${no}-1`} />
        </>
    )
}

function ComponentTree() {
    return (
        <section className="flex w-[185px] shrink-0 flex-col border-r border-[#a0a0a0] bg-white pt-[5px] pr-px pl-0.5">
            <div className="flex h-[25px] shrink-0 items-start">
                <input aria-label="搜索构件" placeholder="搜索构件..." className="h-6 w-[158px] border border-[#777] bg-white px-0.5 outline-none placeholder:text-[#777]" />
                <button aria-label="搜索" className="flex h-6 w-6 items-center justify-center"><Icon name="search" /></button>
            </div>
            <div className="flex min-h-0 flex-1 border border-[#828790] py-px">
                <ul className="min-w-0 flex-1 overflow-hidden">
                    <CapLeaf label="(底)CT-93-1" />
                    {caps.map((no) => <CapGroup key={no} no={no} />)}
                </ul>
                <ScrollBar gap="h-[442px]" thumb="h-[84px]" />
            </div>
        </section>
    )
}

interface Property {
    name: string
    value: string
    check?: boolean
    gray?: boolean
}

const properties: Property[] = [
    { name: '名称', value: 'CT-98' },
    { name: '长度(mm)', value: '2283', check: true, gray: true },
    { name: '宽度(mm)', value: '2200', check: true, gray: true },
    { name: '高度(mm)', value: '500', check: true, gray: true },
    { name: '顶标高(m)', value: '层底标高+0.5', check: true },
    { name: '底标高(m)', value: '层底标高', check: true },
    { name: '扣减板/筏板面筋', value: '全部扣减', check: true },
    { name: '扣减板/筏板底筋', value: '不扣减', check: true },
    { name: '计算设置', value: '按默认计算设置计算' },
    { name: '节点设置', value: '按默认节点设置计算' },
    { name: '搭接设置', value: '按默认搭接设置计算' },
    { name: '保护层厚度(mm)', value: '(40)' },
    { name: '汇总信息', value: '桩承台', check: true },
    { name: '备注', value: '', check: true },
    { name: '显示样式', value: '', gray: true },
]

function PropertyRow({ item, no }: { item: Property; no: number }) {
    const active = no === 8
    const cell = 'border-r border-b border-[#c0c0c0] p-0'
    let nameColor = item.gray ? 'text-[#808080]' : 'text-black'
    if (no === 1) nameColor = 'text-[#0000e0]'
    if (active) nameColor = 'bg-[#0078d7] text-white'
    return (
        <tr className="h-[19px]">
            <th className={`${cell} text-center font-normal ${active ? 'bg-[#fdd08a] text-[#4b0060]' : 'bg-[#f4f4f4]'}`}>{no}</th>
            <td className={`${cell} ${nameColor}`}>
                <span className="flex h-[18px] items-center">
                    <span className="flex w-[19px] shrink-0 justify-center">
                        {no === 15 && (
                            <button aria-label="展开显示样式" className="flex size-[13px] items-center justify-center border border-[#999] bg-white">
                                <svg viewBox="0 0 9 9" className="size-[9px]"><path d="M4.500 1v7M1 4.500h7" stroke="#000" /></svg>
                            </button>
                        )}
                    </span>
                    {item.name}
                </span>
            </td>
            <td className={`${cell} pl-0.5 ${item.gray ? 'text-[#808080]' : ''} ${active ? 'bg-[#d8e9f8]' : ''}`}>{item.value}</td>
            <td className={cell}>
                {item.check && (
                    <input type="checkbox" aria-label={`附加 ${item.name}`} className="mx-auto block size-[13px] appearance-none border border-[#333] bg-white" />
                )}
            </td>
        </tr>
    )
}

function PropertyPanel() {
    const head = 'border-r border-b border-[#c0c0c0] p-0 font-normal'
    return (
        <section className="ml-1 flex min-w-0 flex-1 flex-col border-l border-[#ddd] bg-white">
            <div className="flex h-5 shrink-0 items-stretch">
                <button className="w-[63px] border-t border-r border-[#d0d0d0] bg-white whitespace-nowrap">属性编辑</button>
                <span className="flex-1 border-b border-[#d9d9d9]" />
            </div>
            <div className="mt-1 mr-1 mb-[3px] ml-[3px] min-h-0 flex-1 border border-[#a0a0a0] pt-px pl-px">
                <table className="w-[369px] table-fixed border-separate border-spacing-0">
                    <colgroup>
                        <col className="w-[21px]" />
                        <col className="w-[191px]" />
                        <col className="w-[126px]" />
                        <col className="w-[31px]" />
                    </colgroup>
                    <thead>
                        <tr className="h-[23px] bg-gradient-to-b from-white to-[#ececec]">
                            <th className={head}></th>
                            <th className={head}>属性名称</th>
                            <th className={`${head} bg-gradient-to-b from-[#f9d99f] to-[#f1c15f] text-[#4b0060]`}>属性值</th>
                            <th className={head}>附加</th>
                        </tr>
                    </thead>
                    <tbody>
                        {properties.map((item, i) => <PropertyRow key={item.name} item={item} no={i + 1} />)}
                    </tbody>
                </table>
            </div>
        </section>
    )
}

function StatusBar() {
    const cell = 'flex h-5 items-center border border-[#d4d4d4] whitespace-nowrap bg-gradient-to-b from-white to-[#f0f0f0]'
    return (
        <footer className={`flex h-[22px] shrink-0 items-end gap-0.5 ${SONG}`}>
            <span className={`${cell} w-[148px] shrink-0`} />
            <span className={`${cell} w-[79px] shrink-0 pl-px`}>层高:2.15m</span>
            <span className={`${cell} w-[97px] shrink-0 pl-px`}>底标高:-2.2m</span>
            <span className={`${cell} w-12 shrink-0 pl-px`}>0</span>
            <span className={`${cell} min-w-0 flex-1 pl-px`}>
                在选择板/筏板底筋遇到此承台时，选择"全部扣减"根据节点设置锚入此承台，选择"不扣减"贯通布置，选择"隔一扣一"则断一根，贯通布置一根。
            </span>
            <span className={`${cell} w-[72px] shrink-0 pl-0.5`}>402 FPS</span>
        </footer>
    )
}

const pinned = [
    { name: 'taskView', label: '任务视图' },
    { name: 'clover', label: '浏览助手' },
    { name: 'eWhite', label: '浏览器' },
    { name: 'swirl', label: '消息' },
    { name: 'edge', label: 'Edge' },
    { name: 'ie', label: 'Internet Explorer' },
    { name: 'explorer', label: '文件资源管理器' },
    { name: 'pad', label: '便笺', running: true },
]

const running = [
    { name: 'glodon', label: '广联达', active: true },
    { name: 'gBlue', label: '云助手' },
    { name: 'eGreen', label: '安全浏览器' },
]

function TaskBar() {
    return (
        <div className={`flex h-10 shrink-0 items-stretch bg-[#030c10] text-white ${YAHEI}`}>
            <button aria-label="开始" className="flex w-12 shrink-0 items-center justify-center bg-black"><Icon name="windows" /></button>
            <label className="flex w-[344px] shrink-0 items-center gap-1.5 bg-[#333] pr-3 pl-2">
                <svg viewBox="0 0 22 22" className="size-[22px] shrink-0"><circle cx="11" cy="11" r="9" fill="none" stroke="#f4f4f4" strokeWidth="2.800" /></svg>
                <input aria-label="搜索" placeholder="在这里输入你要搜索的内容" className="min-w-0 flex-1 bg-transparent text-sm outline-none placeholder:text-[#9b9b9b]" />
                <svg viewBox="0 0 16 20" className="h-5 w-4 shrink-0"><path d="M5.500 1.500h5v10h-5zM3 9v5.500h10V9M8 14.500V19" fill="none" stroke="#aaa" strokeWidth="1.200" /></svg>
            </label>
            {pinned.map((app) => (
                <button key={app.name} aria-label={app.label} className="flex w-[50px] shrink-0 flex-col items-center">
                    <span className="flex flex-1 items-center"><Icon name={app.name} className="size-6" /></span>
                    <span className={`-mt-0.5 h-0.5 w-10 ${app.running ? 'bg-[#76b9ed]' : ''}`} />
                </button>
            ))}
            {running.map((app) => (
                <button key={app.name} aria-label={app.label} className={`flex w-12 shrink-0 flex-col items-center ${app.active ? 'bg-[#3a4449]' : ''}`}>
                    <span className="flex flex-1 items-center"><Icon name={app.name} className="size-6" /></span>
                    <span className={`-mt-0.5 h-0.5 bg-[#76b9ed] ${app.active ? 'w-12' : 'w-10'}`} />
                </button>
            ))}
            <div className="ml-auto flex shrink-0 items-center whitespace-nowrap">
                <span className="w-6">链接</span>
                <span className="w-[86px] text-center leading-[18px]">21%<br />CPU使用</span>
                <Icon name="chevUp" />
                <span className="flex w-7 justify-center"><Icon name="battery" /></span>
                <span className="flex w-6 justify-center"><Icon name="wifi" /></span>
                <span className="flex w-[22px] justify-center"><Icon name="volume" /></span>
                <span className="flex w-8 justify-center"><Icon name="keyboard" className="size-6" /></span>
                <span className="w-6 text-center">中</span>
                <span className="flex w-8 justify-center"><Icon name="sogou" /></span>
                <time className="w-[76px] text-center leading-[18px]">9:26<br />2018/5/31</time>
                <button aria-label="通知" className="relative flex w-10 justify-center">
                    <Icon name="notice" />
                    <span className="absolute top-1.5 left-5 flex size-[15px] items-center justify-center rounded-full border border-[#888] bg-[#222] text-[11px] leading-3">1</span>
                </button>
                <span className="h-10 w-[13px] bg-black pl-2"><span className="block h-full w-px bg-[#555]" /></span>
            </div>
        </div>
    )
}

export default function App() {
    return (
        <div className={`relative flex h-screen flex-col overflow-hidden bg-[#f0f0f0] text-xs leading-4 text-black ${YAHEI}`}>
            <TitleBar />
            <MenuBar />
            <ToolBar />
            <main className={`flex min-h-0 flex-1 ${SONG}`}>
                <ModulePanel />
                <div className="ml-[3px] flex min-w-0 flex-1 flex-col">
                    <ComponentToolBar />
                    <div className="flex min-h-0 flex-1">
                        <ComponentTree />
                        <PropertyPanel />
                    </div>
                </div>
            </main>
            <StatusBar />
            <TaskBar />
            <div className="pointer-events-none absolute top-[260px] left-[396px] h-[63px] w-[376px] border-[7px] border-[#fe0000]" />
        </div>
    )
}
